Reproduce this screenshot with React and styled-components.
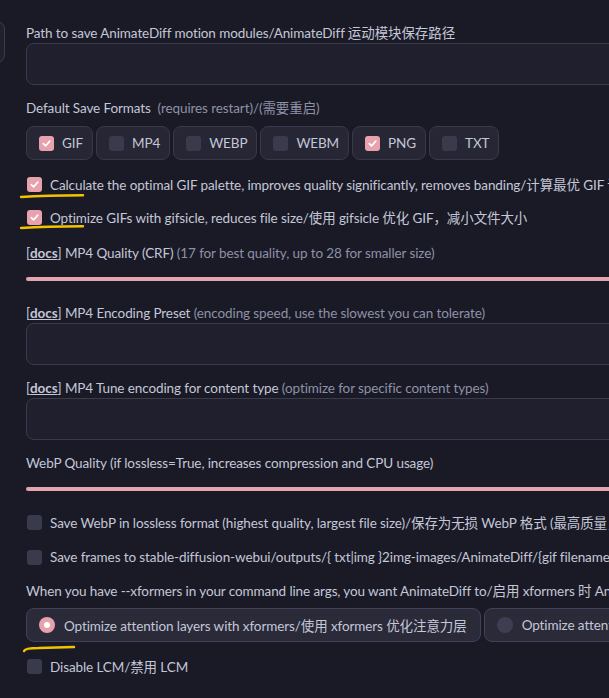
import React from "react";
import styled, { createGlobalStyle } from "styled-components";

const Global = createGlobalStyle`
  html, body { margin: 0; padding: 0; background: #1a1a26; overflow: hidden; }
  body { font-family: Lato, "Noto Sans CJK SC", sans-serif; color: #c3c7d8; }
  * { box-sizing: border-box; }
`;

const Page = styled.div`
  display: flex;
  width: 700px;
  height: 698px;
  background: #1a1a26;
`;

const Sidebar = styled.div`
  width: 6px;
  overflow: hidden;
  flex-shrink: 0;
  position: relative;
`;

const SideBox = styled.div`
  margin-top: 21px;
  margin-left: -40px;
  width: 45px;
  height: 42px;
  border: 1px solid #3b3b4c;
  border-radius: 8px;
  background: #20202e;
`;

const SideGlyph = styled.div`
  margin-left: -8px;
  margin-top: ${(p) => p.$top}px;
  font-size: 13px;
  color: #c3c7d8;
  line-height: 14px;
`;

const Main = styled.div`
  padding: 23px 0 0 20px;
  width: 680px;
  display: flex;
  flex-direction: column;
  font-size: 13.5px;
  letter-spacing: -0.1px;
`;

const Label = styled.div`
  line-height: 20px;
  color: #c3c7d8;
  white-space: nowrap;
`;

const Muted = styled.span`
  color: #8d91a6;
`;

const Docs = styled.span`
  font-weight: 700;
  text-decoration: underline;
`;

const Input = styled.div`
  height: 42px;
  border: 1px solid #3b3b4c;
  border-radius: 8px;
  background: #1f1f2d;
  margin-bottom: ${(p) => p.$mb}px;
`;

const Group = styled.div`
  display: flex;
  gap: 3px;
  margin-top: ${(p) => p.$mt ?? 0}px;
  margin-bottom: ${(p) => p.$mb}px;
`;

const Chip = styled.div`
  position: relative;
  height: 34px;
  display: flex;
  align-items: center;
  gap: 8px;
  padding: 0 9px 0 12px;
  border: 1px solid #393949;
  border-radius: 8px;
  background: #262634;
  color: #c3c7d8;
  white-space: nowrap;
  flex-shrink: 0;
`;

const Box = styled.span`
  width: 15px;
  height: 15px;
  border-radius: 3px;
  flex-shrink: 0;
  display: inline-flex;
  align-items: center;
  justify-content: center;
  background: ${(p) => (p.$on ? "#e8a2ad" : "#3a3a4d")};
`;

const Row = styled.div`
  position: relative;
  display: flex;
  align-items: center;
  gap: 8px;
  height: 20px;
  padding-left: 1px;
  margin-bottom: ${(p) => p.$mb}px;
  white-space: nowrap;
`;

const Slider = styled.div`
  height: 4px;
  border-radius: 2px;
  background: #e3a4ae;
  margin-top: ${(p) => p.$mt}px;
  margin-bottom: ${(p) => p.$mb}px;
`;

const Radio = styled.span`
  width: 16px;
  height: 16px;
  border-radius: 50%;
  flex-shrink: 0;
  display: inline-flex;
  align-items: center;
  justify-content: center;
  background: ${(p) => (p.$on ? "#e8a2ad" : "#3e3e52")};
  &::after {
    content: "";
    width: 6px;
    height: 6px;
    border-radius: 50%;
    background: ${(p) => (p.$on ? "#fff" : "transparent")};
  }
`;

const RadioChip = styled(Chip)`
  background: #2a2a39;
  border-color: #41415a;
  gap: 9px;
  padding: 0 13px 0 12px;
`;

const Mark = styled.svg`
  position: absolute;
  left: ${(p) => p.$left}px;
  top: ${(p) => p.$top}px;
  pointer-events: none;
  overflow: visible;
`;

const Check = () => (
  <svg width="11" height="11" viewBox="0 0 12 12">
    <path d="M2.5 6.2 L5 8.6 L9.6 3.4" fill="none" stroke="#fff" strokeWidth="1.8" strokeLinecap="round" strokeLinejoin="round" />
  </svg>
);

const Underline = ({ left, top, w, hook }) => (
  <Mark $left={left} $top={top} width={w} height="8">
    <path
      d={hook ? `M1 6 Q 2 3 ${w * 0.3} 3 L ${w - 1} 2` : `M1 4 Q ${w * 0.4} 2.4 ${w - 1} 2.2`}
      fill="none"
      stroke="#f2c300"
      strokeWidth="2.4"
      strokeLinecap="round"
    />
  </Mark>
);

const formats = [
  ["GIF", true],
  ["MP4", false],
  ["WEBP", false],
  ["WEBM", false],
  ["PNG", true],
  ["TXT", false],
];

export default function App() {
  return (
    <>
      <Global />
      <Page>
        <Sidebar>
          <SideBox />
          <SideGlyph $top={4}>,</SideGlyph>
          <SideGlyph $top={186}>≡</SideGlyph>
        </Sidebar>
        <Main>
          <Label>Path to save AnimateDiff motion modules/AnimateDiff 运动模块保存路径</Label>
          <Input $mb={13} />
          <Label>
            Default Save Formats&nbsp; <Muted>(requires restart)/(需要重启)</Muted>
          </Label>
          <Group $mt={8} $mb={14}>
            {formats.map(([n, on]) => (
              <Chip key={n}>
                <Box $on={on}>{on && <Check />}</Box>
                {n}
              </Chip>
            ))}
          </Group>
          <Row $mb={13}>
            <Box $on>
              <Check />
            </Box>
            Calculate the optimal GIF palette, improves quality significantly, removes banding/计算最优 GIF 调色板，显著提升质量
            <Underline left={-6} top={19} w={64} />
          </Row>
          <Row $mb={16}>
            <Box $on>
              <Check />
            </Box>
            Optimize GIFs with gifsicle, reduces file size/使用 gifsicle 优化 GIF，减小文件大小
            <Underline left={-6} top={17} w={64} />
          </Row>
          <Label>
            [<Docs>docs</Docs>] MP4 Quality (CRF) <Muted>(17 for best quality, up to 28 for smaller size)</Muted>
          </Label>
          <Slider $mt={14} $mb={22} />
          <Label>
            [<Docs>docs</Docs>] MP4 Encoding Preset <Muted>(encoding speed, use the slowest you can tolerate)</Muted>
          </Label>
          <Input $mb={13} />
          <Label>
            [<Docs>docs</Docs>] MP4 Tune encoding for content type <Muted>(optimize for specific content types)</Muted>
          </Label>
          <Input $mb={13} />
          <Label>WebP Quality (if lossless=True, increases compression and CPU usage)</Label>
          <Slider $mt={14} $mb={21} />
          <Row $mb={15}>
            <Box />
            Save WebP in lossless format (highest quality, largest file size)/保存为无损 WebP 格式 (最高质量，最大文件)
          </Row>
          <Row $mb={14}>
            <Box />
            Save frames to stable-diffusion-webui/outputs/{"{ txt|img }"}2img-images/AnimateDiff/{"{gif filename}"}/{"{frame}"}
          </Row>
          <Label>When you have --xformers in your command line args, you want AnimateDiff to/启用 xformers 时 AnimateDiff 应</Label>
          <Group $mt={7} $mb={14}>
            <RadioChip>
              <Radio $on />
              Optimize attention layers with xformers/使用 xformers 优化注意力层
              <Underline left={-4} top={36} w={52} hook />
            </RadioChip>
            <RadioChip>
              <Radio />
              Optimize attention layers with sdp
            </RadioChip>
          </Group>
          <Row $mb={0}>
            <Box />
            Disable LCM/禁用 LCM
          </Row>
        </Main>
      </Page>
    </>
  );
}
